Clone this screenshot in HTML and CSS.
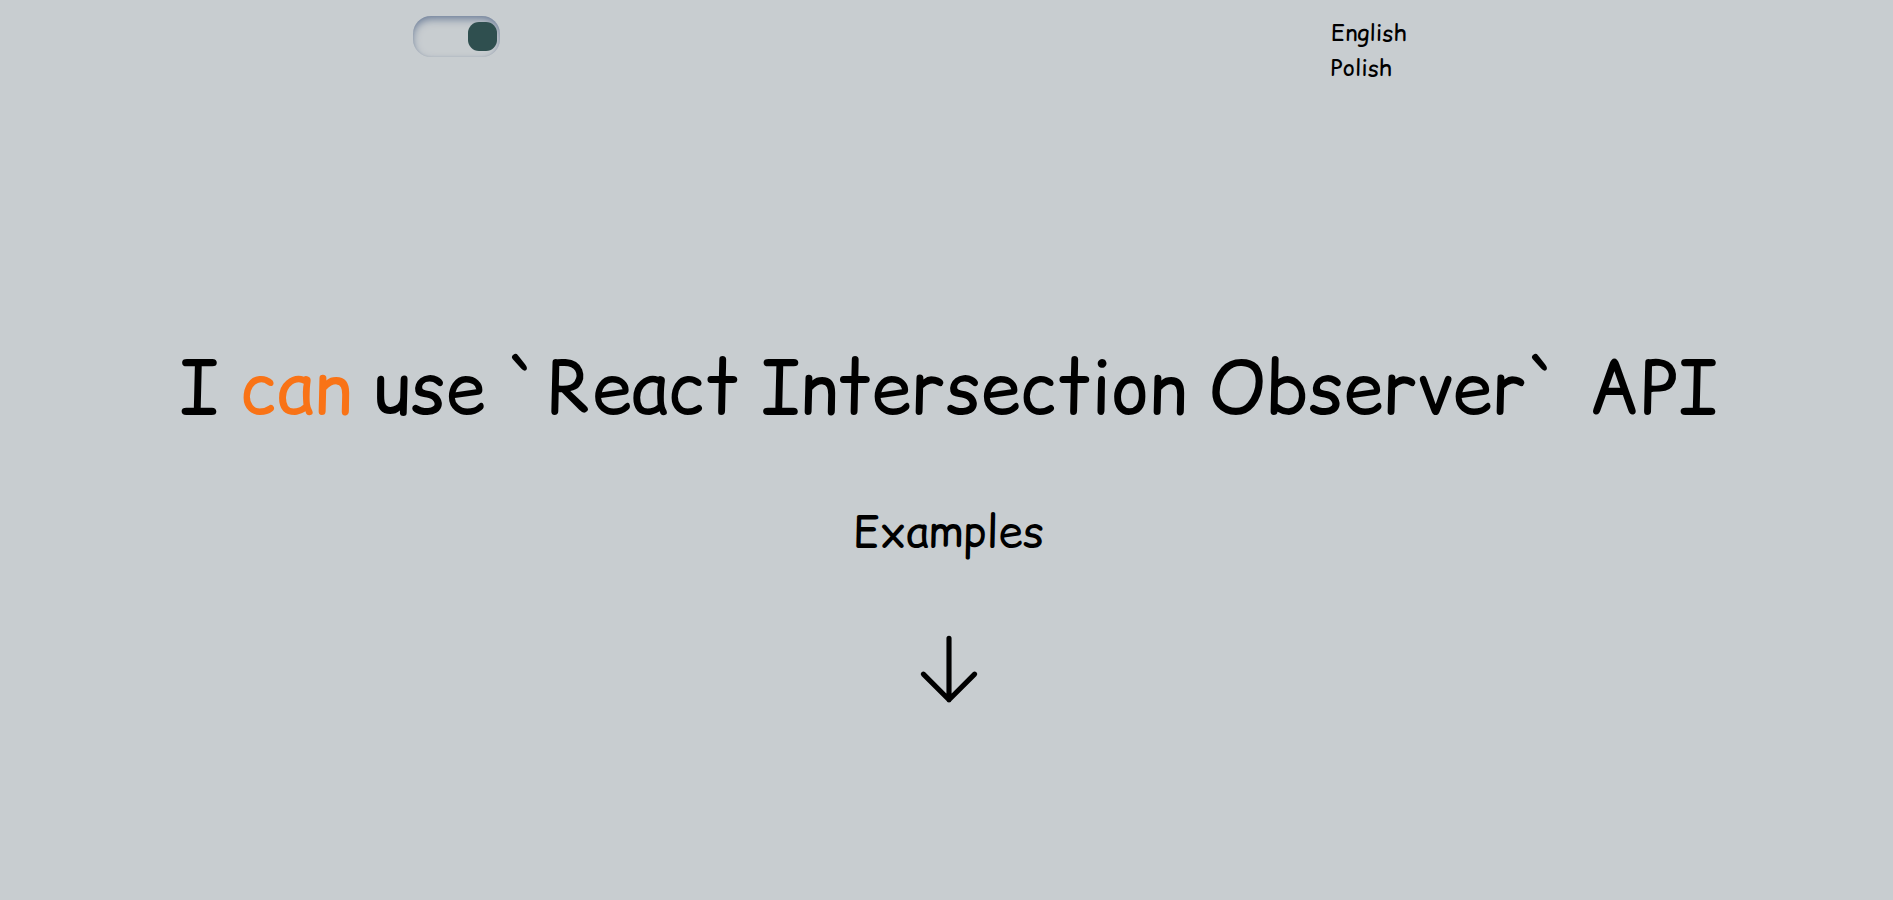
FILE: index.html
```html
<!DOCTYPE html>
<html lang="en">
<head>
<meta charset="utf-8">
<meta name="viewport" content="width=device-width, initial-scale=1">
<title>React Intersection Observer</title>
<link rel="stylesheet" href="styles.css">
</head>
<body>
<header class="topbar">
  <div class="topbar-cell">
    <input class="switch" type="checkbox" role="switch" aria-label="Toggle theme" checked>
  </div>
  <nav class="topbar-cell languages" aria-label="Language">
    <button class="language" type="button" lang="en">English</button>
    <button class="language" type="button" lang="pl">Polish</button>
  </nav>
</header>
<main class="hero">
  <h1 class="title">I <span class="accent">can</span> use `React Intersection Observer` API</h1>
  <h2 class="subtitle">Examples</h2>
  <svg class="arrow" viewBox="0 0 24 24" fill="none" stroke="currentColor" stroke-width="1.5" stroke-linecap="round" stroke-linejoin="round" aria-hidden="true">
    <path d="M19.5 13.5 12 21m0 0-7.5-7.5M12 21V3"/>
  </svg>
</main>
</body>
</html>
```
FILE: styles.css
```css
* {
  box-sizing: border-box;
}

body {
  margin: 0;
  min-height: 100vh;
  display: flex;
  flex-direction: column;
  background: #c8cdd0;
  color: #000;
  font-family: "Comic Relief", "Comic Sans MS", "Comic Neue", "Noto Sans", sans-serif;
}

.topbar {
  display: grid;
  grid-template-columns: 1fr 1fr;
  padding: 16px 68px 0 0;
}

.topbar-cell {
  display: flex;
  justify-content: center;
}

.switch {
  appearance: none;
  display: flex;
  align-items: center;
  justify-content: flex-end;
  width: 87px;
  height: 41px;
  margin: 0;
  padding: 0 3px 0 4px;
  border-radius: 18px;
  box-shadow: inset 0 4px 8px -1px #6c7d98, inset 0 0 2px #b0b6be;
  cursor: pointer;
}

.switch::before {
  content: "";
  width: 29px;
  height: 29px;
  border-radius: 11px;
  background: #2f4f4f;
}

.switch:not(:checked) {
  justify-content: flex-start;
}

.languages {
  flex-direction: column;
  align-items: flex-start;
  justify-self: center;
}

.language {
  padding: 0;
  border: 0;
  background: none;
  color: inherit;
  font: inherit;
  font-size: 23px;
  line-height: 35px;
  cursor: pointer;
}

.hero {
  flex: 1;
  display: flex;
  flex-direction: column;
  align-items: center;
  justify-content: center;
  padding: 60px 0 0 4px;
}

.title {
  margin: 0;
  font-size: 72px;
  font-weight: 400;
  line-height: 104px;
  text-align: center;
}

.accent {
  color: #f97316;
}

.subtitle {
  margin: 60px 0 64px;
  font-size: 44px;
  font-weight: 400;
  line-height: 64px;
}

.arrow {
  width: 82px;
  height: 82px;
}
```
